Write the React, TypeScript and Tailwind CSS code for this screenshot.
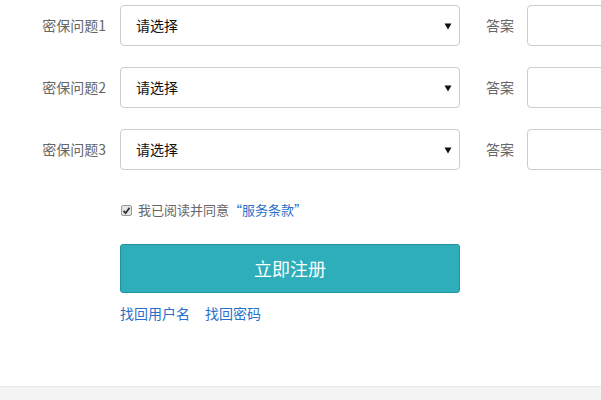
const questions = ['密保问题1', '密保问题2', '密保问题3']

const font = { fontFamily: '"Microsoft YaHei", "Noto Sans CJK SC", sans-serif' }

function QuestionRow({ label }: { label: string }) {
  return (
    <div className="flex items-center h-[41px]">
      <label className="w-[106px] shrink-0 text-right text-[14px] text-[#666]">{label}</label>
      <div className="ml-[14px] w-[340px] h-[41px] shrink-0 flex items-center justify-between border border-[#ccc] rounded-[4px] bg-white pl-[15px] pr-[6px]">
        <span className="text-[14px] text-[#111]">请选择</span>
        <svg width="8" height="8" viewBox="0 0 8 8" className="mr-[1px]">
          <path d="M0.5 1.5 H7.5 L4 7.5 Z" fill="#111" />
        </svg>
      </div>
      <span className="ml-[26px] w-[28px] shrink-0 text-[14px] text-[#666]">答案</span>
      <div className="ml-[13px] w-[200px] h-[41px] shrink-0 border border-[#ccc] rounded-[4px] bg-white" />
    </div>
  )
}

export default function App() {
  return (
    <div className="w-[601px] h-[400px] overflow-hidden bg-white flex flex-col" style={font}>
      <div className="flex-1 pt-[5px]">
        <div className="flex flex-col gap-[21px]">
          {questions.map((q) => (
            <QuestionRow key={q} label={q} />
          ))}
        </div>

        <div className="ml-[120px] mt-[33px] flex items-center h-[14px]">
          <span className="w-[11px] h-[11px] ml-[1px] border border-[#999] rounded-[2px] bg-[#e6e6e6] flex items-center justify-center">
            <svg width="9" height="9" viewBox="0 0 9 9">
              <path d="M1.5 4.8 L3.6 7 L7.6 1.8" stroke="#333" strokeWidth="1.8" fill="none" />
            </svg>
          </span>
          <span className="ml-[6px] text-[13px] text-[#666]">
            我已阅读并同意<a className="text-[#2a6fc9]">“服务条款”</a>
          </span>
        </div>

        <button className="ml-[120px] mt-[27px] w-[340px] h-[49px] rounded-[3px] border border-[#20939d] bg-[#2eaebb] text-white text-[18px] flex items-center justify-center">
          立即注册
        </button>

        <div className="ml-[120px] mt-[10px] flex gap-[15px] text-[14px] text-[#2a6fc9]">
          <a>找回用户名</a>
          <a>找回密码</a>
        </div>
      </div>
      <div className="h-[14px] border-t border-[#e6e6e6] bg-[#f4f4f4]" />
    </div>
  )
}
